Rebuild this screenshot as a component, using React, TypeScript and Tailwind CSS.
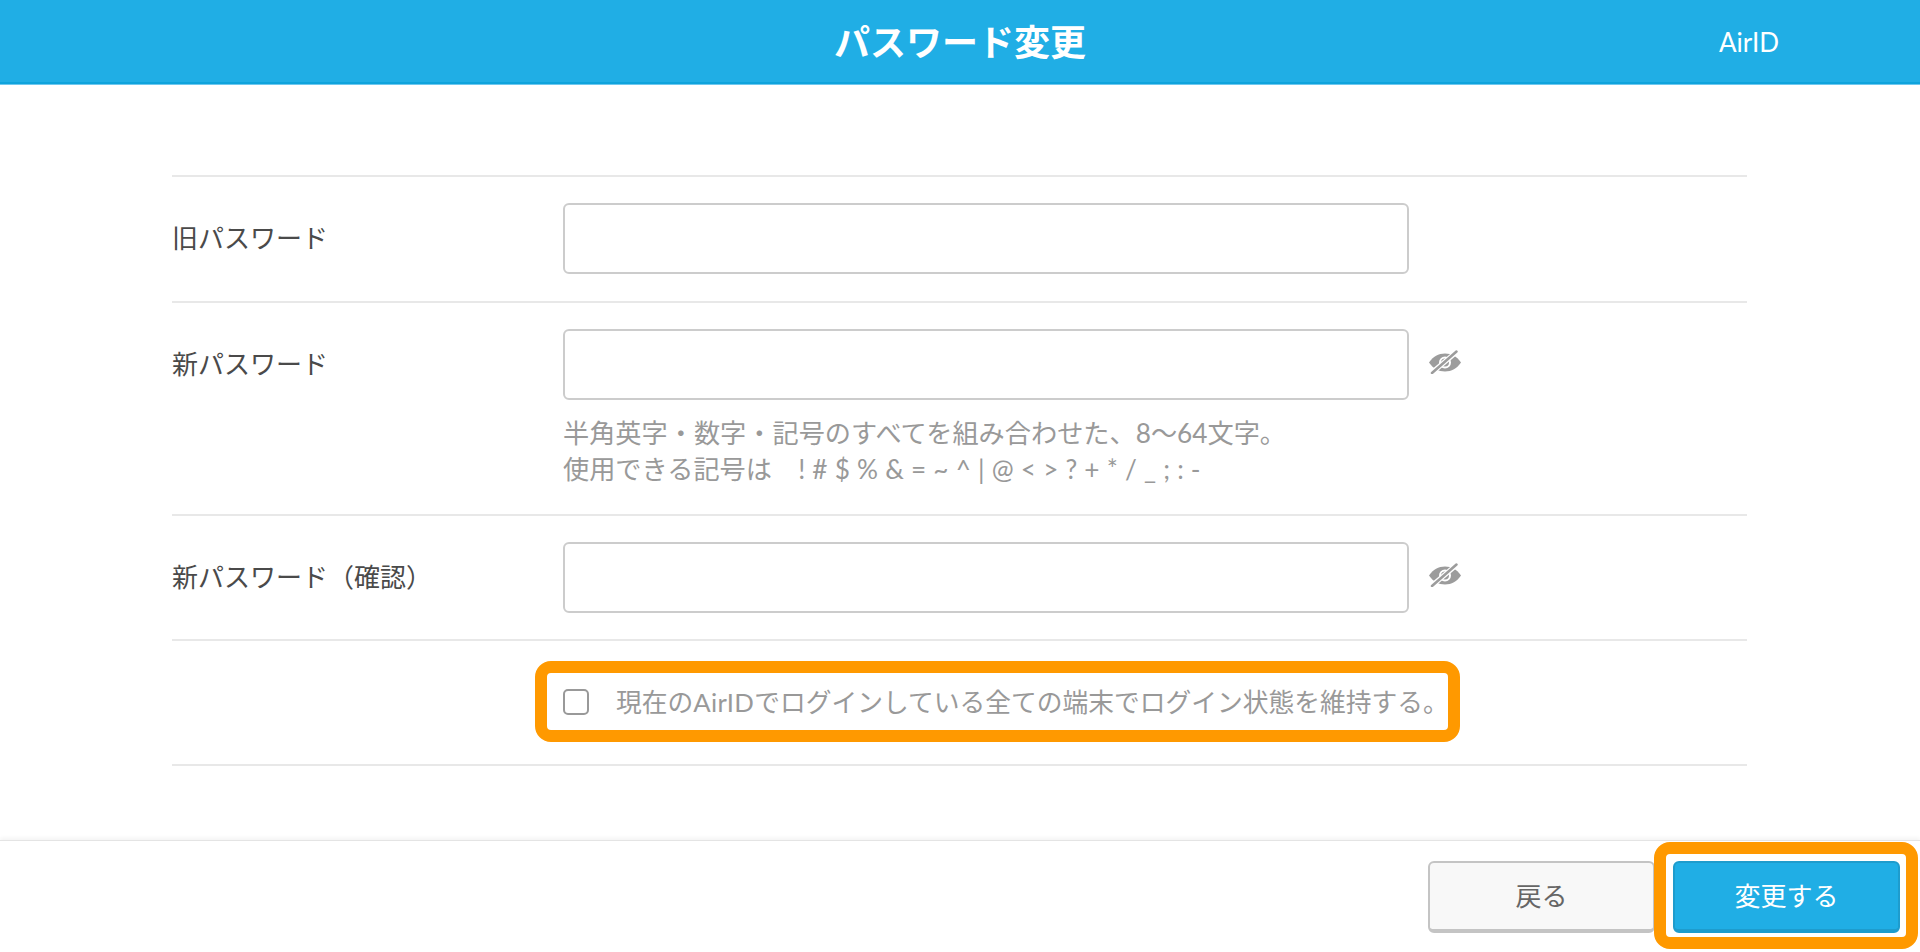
const font = { fontFamily: '"Lato", "Noto Sans CJK JP", sans-serif' };

function EyeOff() {
  return (
    <svg width="34" height="24" viewBox="0 0 34 24" className="ml-[19px] -mt-[4px] shrink-0">
      <path d="M1 12.5C5 6.5 10.5 3.5 17 3.5S29 6.5 33 12.5C29 18.5 23.5 21.5 17 21.5S5 18.5 1 12.5Z" fill="#9c9c9c" />
      <circle cx="17" cy="12.5" r="5" fill="none" stroke="#fff" strokeWidth="2" />
      <path d="M3 23.5 29 1.5" stroke="#fff" strokeWidth="5" />
      <path d="M4 23 28.5 1.5" stroke="#9c9c9c" strokeWidth="2.5" strokeLinecap="round" />
    </svg>
  );
}

function Row({ label, eye, children }: { label: string; eye?: boolean; children?: React.ReactNode }) {
  return (
    <div className="flex border-b-2 border-[#e8e8e8] pt-[26px] pb-[26.5px]">
      <div className="w-[391px] h-[71px] flex items-center text-[26px] text-[#4a4a4a] shrink-0">{label}</div>
      <div>
        <div className="flex items-center">
          <div className="w-[846px] h-[71px] border-2 border-[#cccccc] rounded-[6px] bg-white" />
          {eye && <EyeOff />}
        </div>
        {children}
      </div>
    </div>
  );
}

export default function App() {
  return (
    <div className="relative w-[1920px] h-[952px] bg-white overflow-hidden" style={font}>
      <header className="relative h-[85px] bg-[#20aee5] border-b border-[#6fc8ef] shadow-[inset_0_-2px_0_#0fa3dc] flex items-center justify-center">
        <h1 className="text-[36px] font-bold text-white">パスワード変更</h1>
        <span className="absolute left-[1719px] text-[26px] text-white">AirID</span>
      </header>
      <main className="ml-[172px] w-[1575px] mt-[90px] border-t-2 border-[#e8e8e8]">
        <Row label="旧パスワード" />
        <Row label="新パスワード" eye>
          <div className="mt-[15px] mb-[0.5px] text-[26.2px] leading-[36px] text-[#999999] whitespace-nowrap">
            <p>半角英字・数字・記号のすべてを組み合わせた、8〜64文字。</p>
            <p className="[word-spacing:0.45px]">使用できる記号は　! # $ % &amp; = ~ ^ | @ &lt; &gt; ? + * / _ ; : -</p>
          </div>
        </Row>
        <Row label="新パスワード（確認）" eye />
        <div className="h-[124.5px] border-b-2 border-[#e8e8e8] pl-[391px] flex items-center">
          <span className="w-[26px] h-[26px] rounded-[5px] border-2 border-[#999999] shrink-0" />
          <span className="ml-[27px] text-[25.75px] text-[#999999] whitespace-nowrap">
            現在の<span className="tracking-[0.3px]">AirID</span>でログインしている全ての端末でログイン状態を維持する。
          </span>
        </div>
      </main>
      <footer className="absolute left-0 right-0 bottom-0 h-[112px] border-t border-[#e4e4e4] shadow-[0_-2px_4px_rgba(0,0,0,0.05)] flex justify-end pt-[20px] pr-[20px]">
        <button className="w-[227px] h-[72px] rounded-[6px] border-2 border-b-4 border-[#c4c4c4] bg-[#f8f8f8] text-[26px] text-[#666666]">戻る</button>
        <button className="ml-[18px] w-[227px] h-[72px] rounded-[6px] border-2 border-b-4 border-[#1e9ccd] bg-[#20aee5] text-[26px] text-white">変更する</button>
      </footer>
      <div className="absolute left-[535px] top-[661px] w-[925px] h-[81px] rounded-[16px] border-[12px] border-[#ff9900]" />
      <div className="absolute left-[1654px] top-[842px] w-[264px] h-[107px] rounded-[16px] border-[12px] border-[#ff9900]" />
    </div>
  );
}
